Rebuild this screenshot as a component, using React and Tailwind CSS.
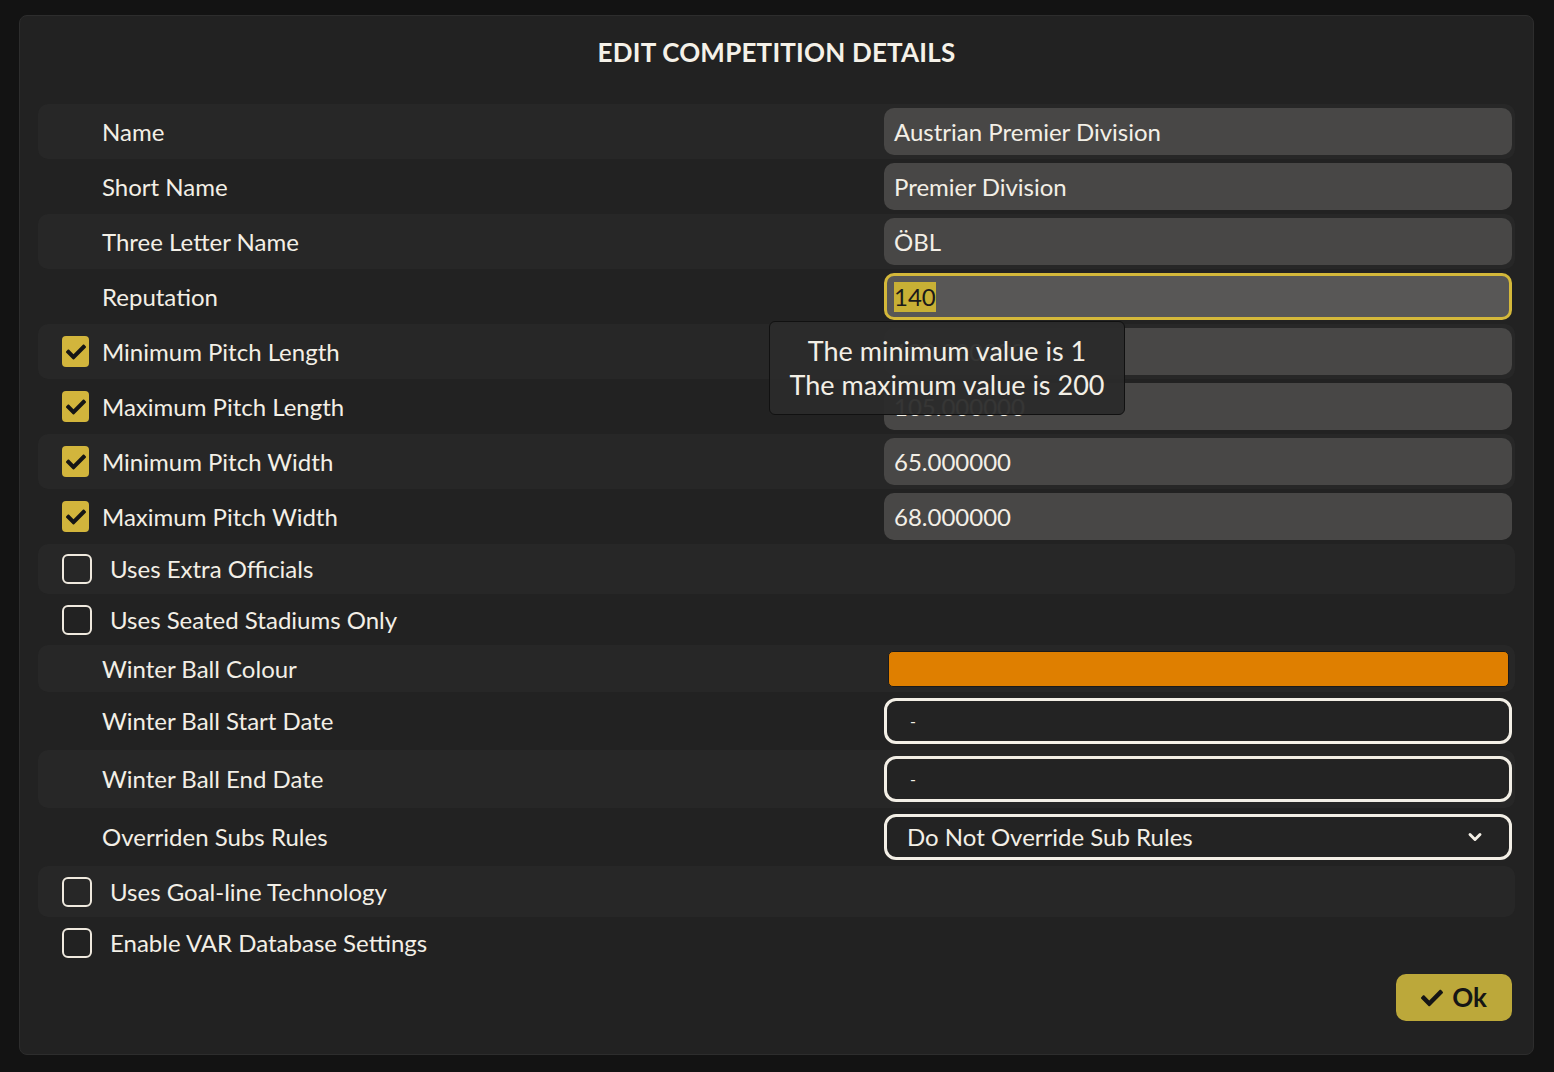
import React from 'react';
import { FaCheck } from 'react-icons/fa';
import { ChevronDown } from 'lucide-react';

const font = { fontFamily: 'Lato, "Noto Sans", sans-serif' };

const Checkbox = ({ checked }) =>
  checked ? (
    <div className="w-[27px] h-[31px] rounded-[4px] bg-[#d2b53c] flex items-center justify-center shrink-0">
      <FaCheck className="text-[#151515] w-[20px] h-[20px]" />
    </div>
  ) : (
    <div className="w-[30px] h-[30px] rounded-[6px] border-2 border-[#efe9de] shrink-0" />
  );

const TextInput = ({ value, focused }) => (
  <div
    className={
      focused
        ? 'w-[628px] h-[47px] rounded-[10px] bg-[#585756] border-[3px] border-[#d4b83a] flex items-center pl-[7px]'
        : 'w-[628px] h-[47px] rounded-[10px] bg-[#484746] flex items-center pl-[10px]'
    }
  >
    {focused ? (
      <span className="bg-[#c8b035] text-[#1a1a1a] leading-[30px]">{value}</span>
    ) : (
      <span className="text-[#f3efe6]">{value}</span>
    )}
  </div>
);

const Row = ({ shaded, height, children }) => (
  <div
    className={`flex items-center rounded-[10px] pr-[3px] ${shaded ? 'bg-[#272727]' : ''}`}
    style={{ height }}
  >
    {children}
  </div>
);

const Label = ({ children }) => <div className="pl-[64px] flex-1 text-[#f3efe6]">{children}</div>;

const CheckLabel = ({ checked, children }) => (
  <div className={`pl-[24px] flex-1 flex items-center text-[#f3efe6] ${checked ? 'gap-[13px]' : 'gap-[18px]'}`}>
    <Checkbox checked={checked} />
    <span>{children}</span>
  </div>
);

const OutlineBox = ({ children }) => (
  <div className="w-[628px] h-[46px] rounded-[12px] border-[3px] border-[#f3efe6] bg-[#232323] flex items-center pl-[20px] pr-[24px] text-[#f3efe6]">
    {children}
  </div>
);

export default function App() {
  return (
    <div className="min-h-screen bg-[#131313] pt-[15px] pl-[19px] pr-[21px] pb-[18px]" style={font}>
      <div className="relative w-[1515px] h-[1040px] rounded-[8px] bg-[#222222] border border-[#2d2d2d] px-[18px]">
        <h1 className="text-center text-[#f5f1e8] font-bold text-[26px] pt-[17px] h-[88px] tracking-[0.2px]">
          EDIT COMPETITION DETAILS
        </h1>

        <div className="text-[24px]">
          <Row shaded height={55}>
            <Label>Name</Label>
            <TextInput value="Austrian Premier Division" />
          </Row>
          <Row height={55}>
            <Label>Short Name</Label>
            <TextInput value="Premier Division" />
          </Row>
          <Row shaded height={55}>
            <Label>Three Letter Name</Label>
            <TextInput value="ÖBL" />
          </Row>
          <Row height={55}>
            <Label>Reputation</Label>
            <TextInput value="140" focused />
          </Row>
          <Row shaded height={55}>
            <CheckLabel checked>Minimum Pitch Length</CheckLabel>
            <TextInput value="100.000000" />
          </Row>
          <Row height={55}>
            <CheckLabel checked>Maximum Pitch Length</CheckLabel>
            <TextInput value="105.000000" />
          </Row>
          <Row shaded height={55}>
            <CheckLabel checked>Minimum Pitch Width</CheckLabel>
            <TextInput value="65.000000" />
          </Row>
          <Row height={55}>
            <CheckLabel checked>Maximum Pitch Width</CheckLabel>
            <TextInput value="68.000000" />
          </Row>
          <Row shaded height={50}>
            <CheckLabel>Uses Extra Officials</CheckLabel>
          </Row>
          <Row height={51}>
            <CheckLabel>Uses Seated Stadiums Only</CheckLabel>
          </Row>
          <Row shaded height={47}>
            <Label>Winter Ball Colour</Label>
            <div className="w-[628px] flex justify-center">
              <div className="w-[621px] h-[36px] rounded-[5px] bg-[#df7f00] border border-[#1a1a1a]" />
            </div>
          </Row>
          <Row height={58}>
            <Label>Winter Ball Start Date</Label>
            <OutlineBox>
              <span className="text-[16px] pl-[3px]">-</span>
            </OutlineBox>
          </Row>
          <Row shaded height={58}>
            <Label>Winter Ball End Date</Label>
            <OutlineBox>
              <span className="text-[16px] pl-[3px]">-</span>
            </OutlineBox>
          </Row>
          <Row height={58}>
            <Label>Overriden Subs Rules</Label>
            <OutlineBox>
              <span className="flex-1">Do Not Override Sub Rules</span>
              <ChevronDown className="w-[20px] h-[20px]" strokeWidth={3.5} />
            </OutlineBox>
          </Row>
          <Row shaded height={51}>
            <CheckLabel>Uses Goal-line Technology</CheckLabel>
          </Row>
          <Row height={51}>
            <CheckLabel>Enable VAR Database Settings</CheckLabel>
          </Row>
        </div>

        <div className="flex justify-end pr-[3px] mt-[6px]">
          <button className="w-[116px] h-[47px] rounded-[10px] bg-[#bca83a] flex items-center justify-center gap-[9px] text-[#151515] font-bold text-[26px]">
            <FaCheck className="w-[22px] h-[22px]" />
            <span>Ok</span>
          </button>
        </div>

        <div className="absolute left-[749px] top-[305px] w-[356px] h-[94px] rounded-[6px] bg-[#2b2b2b]/95 border border-[#111111] flex flex-col items-center justify-center text-[#f3efe6] text-[27px] leading-[34px]">
          <div>The minimum value is 1</div>
          <div>The maximum value is 200</div>
        </div>
      </div>
    </div>
  );
}
